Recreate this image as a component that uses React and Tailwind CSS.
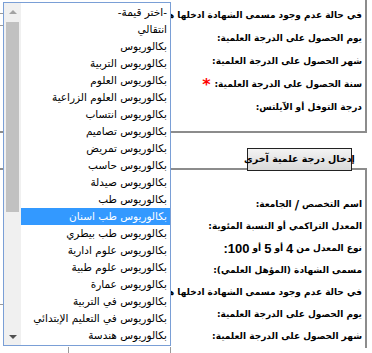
const options = [
  '-اختر قيمة-',
  'انتقالي',
  'بكالوريوس',
  'بكالوريوس التربية',
  'بكالوريوس العلوم',
  'بكالوريوس العلوم الزراعية',
  'بكالوريوس انتساب',
  'بكالوريوس تصاميم',
  'بكالوريوس تمريض',
  'بكالوريوس حاسب',
  'بكالوريوس صيدلة',
  'بكالوريوس طب',
  'بكالوريوس طب اسنان',
  'بكالوريوس طب بيطري',
  'بكالوريوس علوم ادارية',
  'بكالوريوس علوم طبية',
  'بكالوريوس عمارة',
  'بكالوريوس في التربية',
  'بكالوريوس في التعليم الإبتدائي',
  'بكالوريوس هندسة',
];

const Label = ({ children, h = 'h-[23px]' }) => (
  <div className={`flex ${h} items-center whitespace-nowrap pr-[3px] text-[9px] font-bold text-black`}>
    {children}
  </div>
);

const App = () => {
  return (
    <div className="relative h-[353px] w-[372px] overflow-hidden bg-white font-['DejaVu_Sans',sans-serif]">
      <div dir="rtl" className="pr-[5px]">
        <section className="border-b-2 border-r-2 border-[#8c8c8c] pb-[12px] pt-[4px]">
          <Label>في حالة عدم وجود مسمى الشهادة ادخلها هنا:</Label>
          <Label>يوم الحصول على الدرجة العلمية:</Label>
          <Label>شهر الحصول على الدرجة العلمية:</Label>
          <Label>
            سنة الحصول على الدرجة العلمية:
            <span className="mr-[4px] text-[16px] font-bold text-[#ff0000]">*</span>
          </Label>
          <Label>درجة التوفل أو الآيلتس:</Label>
        </section>

        <section className="relative mt-[35px] border-r-2 border-t-2 border-[#8c8c8c] pt-[24px]">
          <div className="absolute right-[13px] top-[-22px] flex h-[23px] w-[105px] items-center justify-center whitespace-nowrap border border-[#222] bg-gradient-to-b from-[#f3f3f3] to-[#d9d9d9] text-[9.5px] font-bold text-black">
            إدخال درجة علمية آخرى
          </div>
          <Label h="h-[22px]">
            اسم التخصص <span className="mx-[3px] text-[12px]">/</span> الجامعة:
          </Label>
          <Label h="h-[22px]">المعدل التراكمي أو النسبة المئوية:</Label>
          <Label h="h-[22px]">
            نوع المعدل من <span className="mx-[3px] font-['Liberation_Sans',sans-serif] text-[13px]">4</span> أو{' '}
            <span className="mx-[3px] font-['Liberation_Sans',sans-serif] text-[13px]">5</span> أو{' '}
            <span className="mr-[3px] font-['Liberation_Sans',sans-serif] text-[13px]">100:</span>
          </Label>
          <Label h="h-[22px]">مسمى الشهادة (المؤهل العلمي):</Label>
          <Label h="h-[22px]">في حالة عدم وجود مسمى الشهادة ادخلها هنا:</Label>
          <Label h="h-[22px]">يوم الحصول على الدرجة العلمية:</Label>
          <Label h="h-[22px]">شهر الحصول على الدرجة العلمية:</Label>
        </section>
      </div>

      {/* bits of the page showing past the open list */}
      <div className="absolute left-0 top-[13px] h-px w-[3px] bg-[#9a9a9a]" />
      <div className="absolute left-0 top-[25px] h-px w-[3px] bg-[#9a9a9a]" />
      <div className="absolute left-0 top-[304px] h-px w-[3px] bg-[#9a9a9a]" />
      <div className="absolute left-[68px] top-[347px] h-[6px] w-px bg-[#9a9a9a]" />
      <div className="absolute left-[170px] top-[347px] h-[6px] w-px bg-[#9a9a9a]" />

      {/* open select list */}
      <div className="absolute left-[3px] top-[2px] flex h-[344px] w-[168px] border border-[#7a9fd6] bg-white">
        <div className="flex w-[17px] shrink-0 flex-col bg-[#f0f0f0]">
          <div className="flex h-[17px] items-center justify-center">
            <div className="h-0 w-0 border-x-[4px] border-b-[4px] border-x-transparent border-b-[#a3a3a3]" />
          </div>
          <div className="flex-1">
            <div className="ml-[2px] mt-[2px] h-[190px] w-[13px] bg-[#c1c1c1]" />
          </div>
          <div className="flex h-[17px] items-center justify-center">
            <div className="h-0 w-0 border-x-[4px] border-t-[4px] border-x-transparent border-t-[#505050]" />
          </div>
        </div>
        <ul dir="rtl" className="min-w-0 flex-1 overflow-hidden pt-[1px] text-[10.5px] text-black">
          {options.map((o) => (
            <li
              key={o}
              className={`h-[17px] whitespace-nowrap pr-[3px] leading-[17px] ${
                o === 'بكالوريوس طب اسنان' ? 'bg-[#3399ff] text-white' : ''
              }`}
            >
              {o}
            </li>
          ))}
        </ul>
      </div>
    </div>
  );
};

export default App;
